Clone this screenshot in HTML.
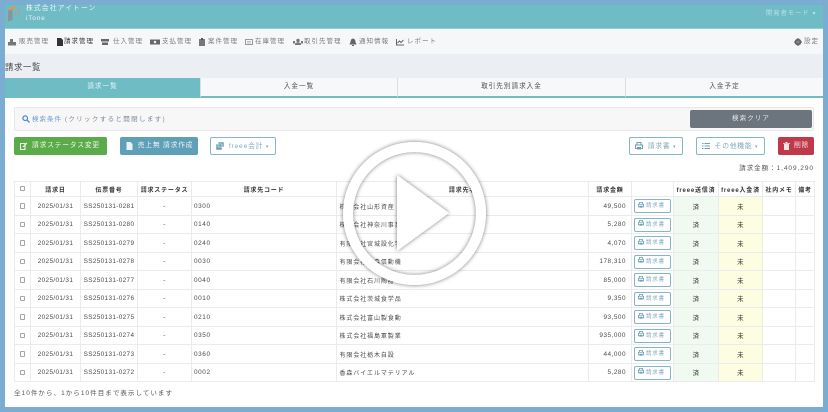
<!DOCTYPE html>
<html lang="ja"><head><meta charset="utf-8"><title>請求一覧</title>
<style>
*{box-sizing:border-box}
html,body{margin:0;padding:0;width:828px;height:412px;overflow:hidden;background:#7bacd1}
body{font-family:"Liberation Sans","Noto Sans CJK JP",sans-serif;color:#555}
#w{position:absolute;left:0;top:0;width:828px;height:412px;overflow:hidden;filter:blur(.35px)}
.a{position:absolute;white-space:nowrap}
#m{left:5px;top:5px;width:818px;height:402px;background:#fff}
.n{top:37px;font-size:6.5px;letter-spacing:1px;line-height:9px;color:#7c7c7c}
.ni{top:37.5px;width:8px;height:8px}
.t{top:78px;height:20px;border-bottom:2px solid #70bcc5;background:#f7f8fa;border-right:1px solid #ddd;text-align:center;font-size:6.6px;letter-spacing:1px;line-height:18px;color:#4f4f4f}
.b{top:137px;height:18px;border-radius:2px;font-size:6.8px;letter-spacing:.75px;line-height:17px;text-align:center}
.o{background:#fff;border:1px solid #86b4ca;color:#7fa9c0}
table{position:absolute;left:14px;top:181px;width:800px;border-collapse:collapse;table-layout:fixed;font-size:6.4px;color:#4a4a4a;background:#fff}
th,td{border:1px solid #e9ebee;padding:0;white-space:nowrap;overflow:hidden;text-align:center;letter-spacing:.35px}
th{height:15px;font-size:6px;color:#333;letter-spacing:.8px;font-weight:bold}
td{height:18.5px;padding-top:.5px}
td.l{text-align:left;padding-left:2px;letter-spacing:.6px}
td.k{text-align:left;padding-left:2.5px;font-size:6px;letter-spacing:.9px}
td.r{text-align:right;padding-right:5px;letter-spacing:.5px}
td.g{background:#f1faf0;color:#333}td.y{background:#fdfde2;color:#333}
.c{display:inline-block;width:5.500px;height:5.500px;border:1px solid #a5a5a5;border-radius:1px;vertical-align:middle}
.p{display:block;width:37px;height:14px;margin:0 auto;border:1px solid #86b4ca;border-radius:2px;color:#7fa9c0;font-size:5.500px;line-height:12px;letter-spacing:.8px;text-align:left;padding-left:3px}
.p svg{width:6px;height:6px;margin-right:2px;vertical-align:-.8px}
</style></head><body><div id="w">
<div class="a" id="m"></div>
<div class="a" style="left:5px;top:5px;width:818px;height:24px;background:#70bcc5;border-bottom:1px solid #8fd0d6"></div>
<svg class="a" style="left:8px;top:5px" width="13" height="17" viewBox="0 0 13 17"><path d="M0 5 3 2 8 0 7 3 3 5Z" fill="#d99a55"/><path d="M0 5.500 4.500 4.500V15L0 16.500Z" fill="#8b9598"/><path d="M7 5.500H8.500V11H7ZM9.500 4H12V9L9.500 10Z" fill="#97a7aa"/></svg>
<div class="a" style="left:26px;top:3.500px;font-size:6.800px;letter-spacing:1.100px;line-height:9px;color:#e8f5f6">株式会社アイトーン</div>
<div class="a" style="left:26px;top:14px;font-size:6.500px;letter-spacing:.8px;line-height:9px;color:#e8f5f6">iTone</div>
<div class="a" style="left:766px;top:9px;font-size:6.200px;letter-spacing:1.100px;line-height:9px;color:#b9e3e6">開発者モード ▾</div>

<div class="a" style="left:5px;top:29px;width:818px;height:25px;background:#f6f7f9"></div>
<svg class="a ni" style="left:8px" viewBox="0 0 8 8"><path d="M0 7.500V4H2V1H5V4H8V7.500Z" fill="#777"/></svg><div class="a n" style="left:19px">販売管理</div>
<svg class="a ni" style="left:56px" viewBox="0 0 8 8"><path d="M1 0H5L7 2V8H1Z" fill="#333"/></svg><div class="a n" style="left:64px;color:#333">請求管理</div>
<svg class="a ni" style="left:101px" viewBox="0 0 8 8"><path d="M0 1H8V3.500H0ZM1 4.500H7V7H1Z" fill="#666"/></svg><div class="a n" style="left:113px">仕入管理</div>
<svg class="a ni" style="left:150px;width:10px" viewBox="0 0 10 8"><path d="M0 1.500H10V6.500H0Z" fill="#666"/><circle cx="5" cy="4" r="1.300" fill="#eee"/></svg><div class="a n" style="left:162px">支払管理</div>
<svg class="a ni" style="left:198px" viewBox="0 0 8 8"><path d="M1 1H7V8H1Z" fill="#777"/><path d="M3 0H5V2H3Z" fill="#555"/></svg><div class="a n" style="left:208px">案件管理</div>
<svg class="a ni" style="left:245px" viewBox="0 0 8 8"><path d="M.5 1.500H7.500V6.500H.5Z" fill="none" stroke="#999"/><path d="M2 3.500H6M2 5H6" stroke="#aaa" stroke-width=".7"/></svg><div class="a n" style="left:255px">在庫管理</div>
<svg class="a ni" style="left:293px;width:10px" viewBox="0 0 10 8"><circle cx="5" cy="2.500" r="1.700" fill="#777"/><path d="M2 7V5.500Q5 3 8 5.500V7ZM0 3H2V5.500H0ZM8 3H10V5.500H8Z" fill="#777"/></svg><div class="a n" style="left:304px">取引先管理</div>
<svg class="a ni" style="left:349px" viewBox="0 0 8 8"><path d="M4 .5Q6.500 1 6.500 4L7.500 6.500H.5L1.500 4Q1.500 1 4 .5ZM3 7H5V8H3Z" fill="#666"/></svg><div class="a n" style="left:359px">通知情報</div>
<svg class="a ni" style="left:396px" viewBox="0 0 8 8"><path d="M.5 1V7H8M1.500 5 3.500 3 5 4.500 7.500 2" fill="none" stroke="#666"/></svg><div class="a n" style="left:407px">レポート</div>
<svg class="a ni" style="left:794px" viewBox="0 0 8 8"><circle cx="4" cy="4" r="2.400" fill="none" stroke="#666" stroke-width="2"/><path d="M4 0V8M0 4H8" stroke="#666"/></svg><div class="a n" style="left:804px;color:#777">設定</div>

<div class="a" style="left:5px;top:54px;width:818px;height:24px;background:#ebeff3"></div>
<div class="a" style="left:5px;top:62px;font-size:8.300px;letter-spacing:.7px;line-height:11px;color:#444">請求一覧</div>

<div class="a t" style="left:5px;width:196px;background:#70bcc5;color:#e4f4f5">請求一覧</div>
<div class="a t" style="left:201px;width:197px">入金一覧</div>
<div class="a t" style="left:398px;width:228px">取引先別請求入金</div>
<div class="a t" style="left:626px;width:197px;border-right:0">入金予定</div>

<div class="a" style="left:14px;top:107px;width:800px;height:24px;background:#f7f7f7;border:1px solid #e8e8e8;border-radius:2px"></div>
<svg class="a" style="left:22px;top:115px" width="8" height="8" viewBox="0 0 8 8"><circle cx="3.200" cy="3.200" r="2.300" fill="none" stroke="#4a86d8" stroke-width="1.200"/><path d="M5 5 7.500 7.500" stroke="#4a86d8" stroke-width="1.300"/></svg>
<div class="a" style="left:32px;top:114.500px;font-size:6.500px;letter-spacing:1px;line-height:9px;color:#7f8b99"><span style="color:#6c9ad8">検索条件</span> <span style="letter-spacing:1.350px">(クリックすると開閉します)</span></div>
<div class="a" style="left:690px;top:110px;width:122px;height:18px;background:#6c757d;border-radius:2px;color:#e6e8ea;font-size:6.500px;letter-spacing:1.100px;line-height:17px;text-align:center">検索クリア</div>

<div class="a b" style="left:14px;width:93px;background:#5cab4a;color:#eef7ec;padding-left:11px">請求ステータス変更</div>
<svg class="a" style="left:20px;top:142px" width="8" height="8" viewBox="0 0 8 8"><path d="M.5 1.500H5V7.500H.5Z M3 5 7 1" fill="none" stroke="#eef7ec" stroke-width="1.100"/></svg>
<div class="a b" style="left:120px;width:78px;background:#5f9fb8;color:#e9f3f7;padding-left:13px">売上無 請求作成</div>
<svg class="a" style="left:126px;top:142px" width="7" height="8" viewBox="0 0 7 8"><path d="M.5 0H4.500L6.500 2V8H.5Z" fill="#e9f3f7"/></svg>
<div class="a b o" style="left:210px;width:66px;padding-left:12px">freee会計 <span style="font-size:5px">▾</span></div>
<svg class="a" style="left:216px;top:142px" width="8" height="8" viewBox="0 0 8 8"><path d="M2 0H8V5H2ZM0 2H6V8H0Z" fill="#6d9fb8" stroke="#fff" stroke-width=".5"/></svg>
<div class="a b o" style="left:629px;width:54px;padding-left:12px">請求書 <span style="font-size:5px">▾</span></div>
<svg class="a" style="left:635px;top:142px" width="8" height="8" viewBox="0 0 8 8"><path d="M2 .5H6V3H2ZM.5 3H7.500V6.500H.5Z" fill="none" stroke="#6d9fb8" stroke-width="1.100"/><path d="M2 5H6V7.500H2Z" fill="#6d9fb8"/></svg>
<div class="a b o" style="left:696px;width:69px;padding-left:12px">その他機能 <span style="font-size:5px">▾</span></div>
<svg class="a" style="left:702px;top:142px" width="8" height="8" viewBox="0 0 8 8"><path d="M0 1.500H1.500M0 4H1.500M0 6.500H1.500M2.500 1.500H8M2.500 4H8M2.500 6.500H8" stroke="#6d9fb8"/></svg>
<div class="a b" style="left:778px;width:36px;background:#c0394a;color:#f7e4e6;padding-left:11px">削除</div>
<svg class="a" style="left:783px;top:142px" width="7" height="8" viewBox="0 0 7 8"><path d="M1 2H6V8H1ZM0 1H7V1.800H0ZM2.500 0H4.500V1H2.500Z" fill="#f7e4e6"/></svg>

<div class="a" style="right:14px;top:164px;font-size:6.500px;letter-spacing:.95px;line-height:9px;color:#555">請求金額：1,409,290</div>

<table><colgroup><col style="width:16px"><col style="width:50px"><col style="width:57px"><col style="width:54px"><col style="width:145px"><col style="width:252px"><col style="width:43px"><col style="width:42px"><col style="width:45px"><col style="width:44px"><col style="width:33px"><col style="width:19px"></colgroup>
<tr><th><span class="c"></span></th><th>請求日</th><th>伝票番号</th><th>請求ステータス</th><th>請求先コード</th><th>請求先名</th><th>請求金額</th><th></th><th>freee送信済</th><th>freee入金済</th><th>社内メモ</th><th>備考</th></tr>
<tr><td><span class="c"></span></td><td>2025/01/31</td><td>SS250131-0281</td><td>-</td><td class="l">0300</td><td class="k">株式会社山形資産</td><td class="r">49,500</td><td><span class="p"><svg viewBox="0 0 8 8"><path d="M2 .5H6V3H2ZM.5 3H7.500V6.500H.5Z" fill="none" stroke="#6d9fb8" stroke-width="1.100"/><path d="M2 5H6V7.500H2Z" fill="#6d9fb8"/></svg>請求書</span></td><td class="g">済</td><td class="y">未</td><td></td><td></td></tr>
<tr><td><span class="c"></span></td><td>2025/01/31</td><td>SS250131-0280</td><td>-</td><td class="l">0140</td><td class="k">株式会社神奈川事業</td><td class="r">5,280</td><td><span class="p"><svg viewBox="0 0 8 8"><path d="M2 .5H6V3H2ZM.5 3H7.500V6.500H.5Z" fill="none" stroke="#6d9fb8" stroke-width="1.100"/><path d="M2 5H6V7.500H2Z" fill="#6d9fb8"/></svg>請求書</span></td><td class="g">済</td><td class="y">未</td><td></td><td></td></tr>
<tr><td><span class="c"></span></td><td>2025/01/31</td><td>SS250131-0279</td><td>-</td><td class="l">0240</td><td class="k">有限会社宮城設化学</td><td class="r">4,070</td><td><span class="p"><svg viewBox="0 0 8 8"><path d="M2 .5H6V3H2ZM.5 3H7.500V6.500H.5Z" fill="none" stroke="#6d9fb8" stroke-width="1.100"/><path d="M2 5H6V7.500H2Z" fill="#6d9fb8"/></svg>請求書</span></td><td class="g">済</td><td class="y">未</td><td></td><td></td></tr>
<tr><td><span class="c"></span></td><td>2025/01/31</td><td>SS250131-0278</td><td>-</td><td class="l">0030</td><td class="k">有限会社青森信動機</td><td class="r">178,310</td><td><span class="p"><svg viewBox="0 0 8 8"><path d="M2 .5H6V3H2ZM.5 3H7.500V6.500H.5Z" fill="none" stroke="#6d9fb8" stroke-width="1.100"/><path d="M2 5H6V7.500H2Z" fill="#6d9fb8"/></svg>請求書</span></td><td class="g">済</td><td class="y">未</td><td></td><td></td></tr>
<tr><td><span class="c"></span></td><td>2025/01/31</td><td>SS250131-0277</td><td>-</td><td class="l">0040</td><td class="k">有限会社石川陶器</td><td class="r">85,000</td><td><span class="p"><svg viewBox="0 0 8 8"><path d="M2 .5H6V3H2ZM.5 3H7.500V6.500H.5Z" fill="none" stroke="#6d9fb8" stroke-width="1.100"/><path d="M2 5H6V7.500H2Z" fill="#6d9fb8"/></svg>請求書</span></td><td class="g">済</td><td class="y">未</td><td></td><td></td></tr>
<tr><td><span class="c"></span></td><td>2025/01/31</td><td>SS250131-0276</td><td>-</td><td class="l">0010</td><td class="k">株式会社茨城食学品</td><td class="r">9,350</td><td><span class="p"><svg viewBox="0 0 8 8"><path d="M2 .5H6V3H2ZM.5 3H7.500V6.500H.5Z" fill="none" stroke="#6d9fb8" stroke-width="1.100"/><path d="M2 5H6V7.500H2Z" fill="#6d9fb8"/></svg>請求書</span></td><td class="g">済</td><td class="y">未</td><td></td><td></td></tr>
<tr><td><span class="c"></span></td><td>2025/01/31</td><td>SS250131-0275</td><td>-</td><td class="l">0210</td><td class="k">株式会社富山製食動</td><td class="r">93,500</td><td><span class="p"><svg viewBox="0 0 8 8"><path d="M2 .5H6V3H2ZM.5 3H7.500V6.500H.5Z" fill="none" stroke="#6d9fb8" stroke-width="1.100"/><path d="M2 5H6V7.500H2Z" fill="#6d9fb8"/></svg>請求書</span></td><td class="g">済</td><td class="y">未</td><td></td><td></td></tr>
<tr><td><span class="c"></span></td><td>2025/01/31</td><td>SS250131-0274</td><td>-</td><td class="l">0350</td><td class="k">株式会社福島軍製業</td><td class="r">935,000</td><td><span class="p"><svg viewBox="0 0 8 8"><path d="M2 .5H6V3H2ZM.5 3H7.500V6.500H.5Z" fill="none" stroke="#6d9fb8" stroke-width="1.100"/><path d="M2 5H6V7.500H2Z" fill="#6d9fb8"/></svg>請求書</span></td><td class="g">済</td><td class="y">未</td><td></td><td></td></tr>
<tr><td><span class="c"></span></td><td>2025/01/31</td><td>SS250131-0273</td><td>-</td><td class="l">0360</td><td class="k">有限会社栃木自設</td><td class="r">44,000</td><td><span class="p"><svg viewBox="0 0 8 8"><path d="M2 .5H6V3H2ZM.5 3H7.500V6.500H.5Z" fill="none" stroke="#6d9fb8" stroke-width="1.100"/><path d="M2 5H6V7.500H2Z" fill="#6d9fb8"/></svg>請求書</span></td><td class="g">済</td><td class="y">未</td><td></td><td></td></tr>
<tr><td><span class="c"></span></td><td>2025/01/31</td><td>SS250131-0272</td><td>-</td><td class="l">0002</td><td class="k">香森バイエルマテリアル</td><td class="r">5,280</td><td><span class="p"><svg viewBox="0 0 8 8"><path d="M2 .5H6V3H2ZM.5 3H7.500V6.500H.5Z" fill="none" stroke="#6d9fb8" stroke-width="1.100"/><path d="M2 5H6V7.500H2Z" fill="#6d9fb8"/></svg>請求書</span></td><td class="g">済</td><td class="y">未</td><td></td><td></td></tr>
</table>
<div class="a" style="left:14px;top:389px;font-size:6.500px;letter-spacing:1.050px;line-height:9px;color:#555">全10件から、1から10件目まで表示しています</div>

<svg class="a" style="left:0;top:0" width="828" height="412" viewBox="0 0 828 412">
<defs><filter id="s" x="-20%" y="-20%" width="140%" height="140%"><feDropShadow dx="0" dy="0" stdDeviation="2" flood-color="#000" flood-opacity=".55"/></filter></defs>
<g filter="url(#s)" fill="#fff">
<path fill-rule="evenodd" d="M414.500 142a71.500 71.500 0 1 0 .01 0ZM414.500 152a61.500 61.500 0 1 1-.01 0Z"/>
<path d="M397 175 449 213 397 251Z"/>
</g></svg>
</div></body></html>
